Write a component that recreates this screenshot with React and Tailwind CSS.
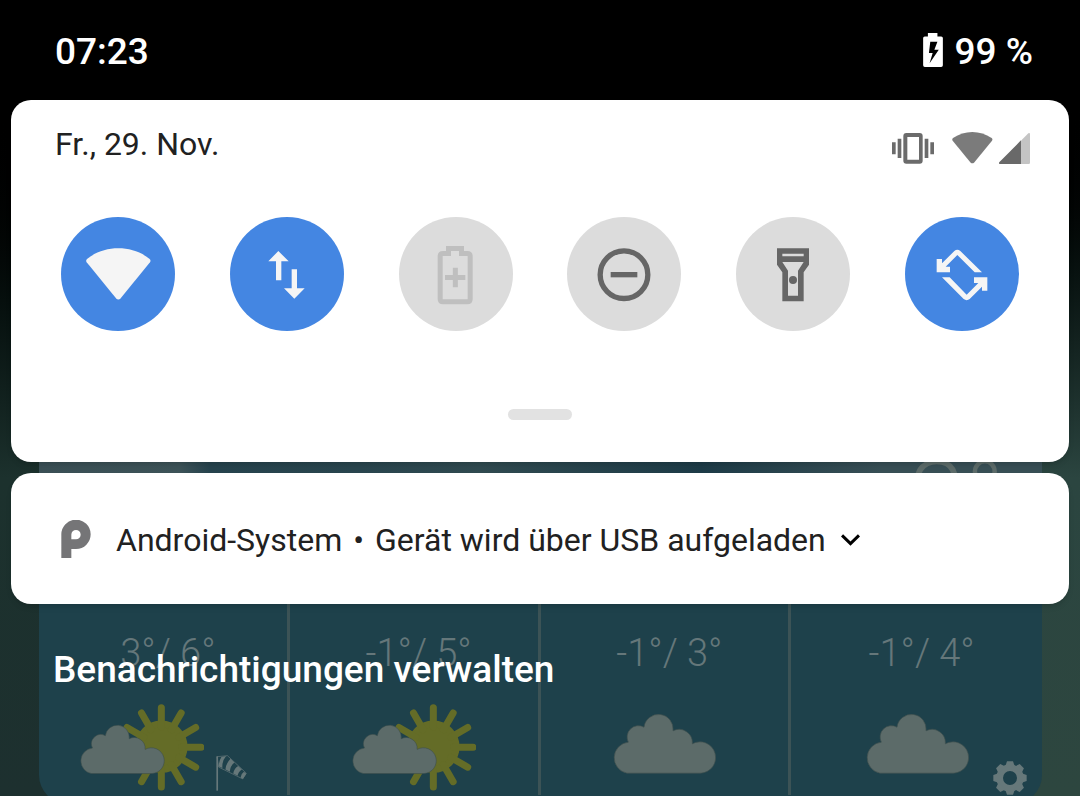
const CLOUD =
  "M145 519 A47 47 0 0 1 149 426 A34 34 0 0 1 196 381 A43 43 0 0 1 283 392 A40 40 0 0 1 341 431 A47 47 0 1 1 366 519 Z";

const TILES = [
  { label: "WLAN", state: "on", icon: WifiTile },
  { label: "Mobile Daten", state: "on", icon: DataTile },
  { label: "Energiesparmodus", state: "disabled", icon: BatteryTile },
  { label: "Bitte nicht stören", state: "off", icon: DndTile },
  { label: "Taschenlampe", state: "off", icon: TorchTile },
  { label: "Automatisch drehen", state: "on", icon: RotateTile },
];

const TILE_STYLES = {
  on: "bg-[#4486e2] text-[#f5f5f5]",
  off: "bg-[#dcdcdc] text-[#666666]",
  disabled: "bg-[#dcdcdc] text-[#bfbfbf]",
};

const FORECAST = [
  { id: 1, temp: "3°/ 6°", sky: "sun", windy: true },
  { id: 2, temp: "-1°/ 5°", sky: "sun" },
  { id: 3, temp: "-1°/ 3°", sky: "cloud" },
  { id: 4, temp: "-1°/ 4°", sky: "cloud" },
];

function WifiTile() {
  return (
    <svg viewBox="62 50 342 342" className="size-full" fill="currentColor" aria-hidden="true">
      <path d="M139 186 Q135 180 141 175 C168 154 200 144 234 144 C268 144 300 154 327 175 Q333 180 329 186 L241 294 Q234 301 227 294 Z" />
    </svg>
  );
}

function DataTile() {
  return (
    <svg viewBox="567 50 342 342" className="size-full" fill="currentColor" aria-hidden="true">
      <path d="M712 152 L743 183 H721 V240 H705 V183 H682 Z" />
      <path d="M752 207 H768 V264 H791 L760 295 L729 264 H752 Z" />
    </svg>
  );
}

function BatteryTile() {
  return (
    <svg viewBox="54 50 342 342" className="size-full" fill="none" stroke="currentColor" aria-hidden="true">
      <path
        strokeWidth="15"
        d="M202.500 144.500 H241.500 V159.500 H259 Q267.500 159.500 267.500 168 V296 Q267.500 304.500 259 304.500 H186 Q177.500 304.500 177.500 296 V168 Q177.500 159.500 186 159.500 H202.500 Z"
      />
      <path strokeWidth="15" d="M223 202 V261 M192 231.500 H253" />
    </svg>
  );
}

function DndTile() {
  return (
    <svg viewBox="561 50 342 342" className="size-full" fill="none" stroke="currentColor" aria-hidden="true">
      <circle cx="732" cy="223" r="71.500" strokeWidth="16" />
      <path strokeWidth="16" d="M692 223 H772" />
    </svg>
  );
}

function TorchTile() {
  return (
    <svg viewBox="48 50 342 342" className="size-full" fill="currentColor" aria-hidden="true">
      <path
        fillRule="evenodd"
        d="M171 144 H267 V193 L251 216 V303 H187 V216 L171 193 Z M187 160 V168 H251 V160 Z M187 185 L204 211 V286 H234 V211 L251 185 Z"
      />
      <circle cx="219" cy="239" r="12" />
    </svg>
  );
}

function RotateTile() {
  return (
    <svg viewBox="555 50 342 342" className="size-full" fill="currentColor" aria-hidden="true">
      <path d="M650 176 H666 V189 L703 152 Q712 144 721 152 L786 216 H764 L712 164 L677 199 H690 V216 H650 Z" />
      <path d="M802 271 H786 V259 L749 296 Q740 303 731 296 L666 231 H689 L740 283 L775 248 H762 V231 H802 Z" />
    </svg>
  );
}

function StatusBar() {
  return (
    <header className="flex h-[100px] items-center justify-between pt-1 pr-[47px] pl-[55px] text-[37px] leading-10 font-medium text-white">
      <time>07:23</time>
      <div className="flex items-center gap-3">
        <svg viewBox="129 41 58 100" className="mb-1 h-[34px] w-[20px]" fill="currentColor" aria-label="Akku wird geladen">
          <path
            fillRule="evenodd"
            d="M143 41 H171 V51 H182 Q187 51 187 56 V136 Q187 141 182 141 H134 Q129 141 129 136 V56 Q129 51 134 51 H143 Z M150 67 L146 100 H157 L148 130 L175 90 H162 L171 67 Z"
          />
        </svg>
        <span>99 %</span>
      </div>
    </header>
  );
}

function ConnectionIcons() {
  return (
    <div className="flex items-end" aria-hidden="true">
      <svg viewBox="36 338 126 93" className="mr-[18px] h-[31px] w-[42px]" fill="#6b6b6b">
        <path d="M36 366h11v36h-11z M53 355h11v58h-11z M134 355h11v58h-11z M151 366h11v36h-11z" />
        <path
          fillRule="evenodd"
          d="M79 338 H119 Q128 338 128 347 V421 Q128 430 119 430 H79 Q70 430 70 421 V347 Q70 338 79 338 Z M82 350 V418 H117 V350 Z"
        />
      </svg>
      <svg viewBox="217 334 123 96" className="mr-[6px] h-[32px] w-[41px]" fill="#7b7b7b">
        <path d="M219 360 Q216 356 220 352 C238 340 257 334 278 334 C299 334 318 340 336 352 Q340 356 337 360 L283 426 Q278 430 273 426 Z" />
      </svg>
      <svg viewBox="357 339 93 93" className="h-[31px] w-[31px]">
        <path fill="#c4c4c4" d="M360 432 H446 Q450 432 450 428 V343 Q450 337 445 340 L358 427 Q355 432 360 432 Z" />
        <path fill="#696969" d="M423 361 V432 H360 Q355 432 358 427 Z" />
      </svg>
    </div>
  );
}

function QuickSettings() {
  return (
    <section className="rounded-[20px] bg-white pt-[24px] pb-[42px] shadow-md">
      <div className="flex items-end justify-between pr-[39px] pl-[44px]">
        <p className="text-[32px] leading-10 text-[#212121]">Fr., 29. Nov.</p>
        <ConnectionIcons />
      </div>
      <div className="mt-[53px] flex justify-between px-[50px]">
        {TILES.map(({ label, state, icon: Icon }) => (
          <button
            key={label}
            type="button"
            aria-label={label}
            aria-pressed={state === "on"}
            disabled={state === "disabled"}
            className={`size-[114px] rounded-full ${TILE_STYLES[state]}`}
          >
            <Icon />
          </button>
        ))}
      </div>
      <div className="mx-auto mt-[78px] h-[11px] w-[64px] rounded-full bg-[#e2e2e2]" />
    </section>
  );
}

function Notification() {
  return (
    <section className="mt-[11px] flex min-h-[131px] items-center rounded-[20px] bg-white px-[50px] pt-0.5 text-[32px] leading-10 text-[#212121] shadow-md">
      <svg viewBox="184 240 90 114" className="mr-[25px] mb-0.5 h-[38px] w-[30px]" fill="#757577" aria-hidden="true">
        <path
          fillRule="evenodd"
          d="M185 354 V284 A44 44 0 1 1 229 327 H215 V354 Z M215 298 H229 A14 14 0 1 0 215 284 Z"
        />
      </svg>
      <span>Android-System</span>
      <span className="mx-[11px]">•</span>
      <span>Gerät wird über USB aufgeladen</span>
      <button type="button" aria-label="Maximieren" className="ml-[15px] text-black">
        <svg viewBox="361 283 56 35" className="h-[12px] w-[19px]" fill="none" stroke="currentColor" aria-hidden="true">
          <path strokeWidth="9" d="M364 287 L389 311 L414 287" />
        </svg>
      </button>
    </section>
  );
}

function Sun() {
  return (
    <svg viewBox="236 311 375 261" className="h-[87px] w-[125px]" aria-hidden="true">
      <g fill="#646c27" stroke="#646c27" strokeWidth="21" strokeLinecap="round">
        <circle cx="483" cy="439" r="68" />
        {[0, 30, 60, 90, 120, 150, 180, 210, 240, 270, 300, 330].map((angle) => (
          <path key={angle} d="M483 380 V322" transform={`rotate(${angle} 483 441)`} />
        ))}
      </g>
      <path d={CLOUD} transform="translate(154 93) scale(0.822)" fill="#5c6b69" stroke="#3a4d4c" strokeWidth="2" />
    </svg>
  );
}

function Cloud() {
  return (
    <svg viewBox="100 342 312 179" className="mb-[17px] h-[60px] w-[104px]" aria-hidden="true">
      <path d={CLOUD} fill="#5c6b69" stroke="#40504f" strokeWidth="2" />
    </svg>
  );
}

function Windsock() {
  return (
    <svg viewBox="648 464 92 107" className="ml-[12px] h-[36px] w-[31px]" fill="#66787a" aria-hidden="true">
      <path d="M649 468 h5 V570 h-5z" />
      <path fill="none" stroke="#66787a" strokeWidth="2" d="M651 469 L682 466 L738 518 L727 535 L656 500 Z" />
      <path d="M664 470 L678 467 Q665 482 667 503 L656 498 Q656 482 664 470 Z" />
      <path d="M691 475 L703 486 Q690 496 689 514 L676 507 Q678 488 691 475 Z" />
      <path d="M714 497 L725 507 Q714 514 712 526 L699 519 Q702 504 714 497 Z" />
      <path d="M731 514 L738 520 L728 535 L721 531 Q723 519 731 514 Z" />
    </svg>
  );
}

function Gear() {
  return (
    <svg viewBox="459 482 102 102" className="size-[34px]" aria-hidden="true">
      <circle cx="510" cy="533" r="31" fill="none" stroke="#66787a" strokeWidth="20" />
      {[0, 45, 90, 135, 180, 225, 270, 315].map((angle) => (
        <path key={angle} d="M495 500 L501 483 H519 L525 500 Z" fill="#66787a" transform={`rotate(${angle} 510 533)`} />
      ))}
    </svg>
  );
}

function WeatherWidget() {
  return (
    <div className="absolute top-[200px] right-[38px] -bottom-[8px] left-[39px] flex flex-col justify-end rounded-[29px] bg-[#1e414b]">
      <div className="flex grow items-end justify-end bg-[linear-gradient(to_right,#3a4f55_0%,#3d5358_14%,#26434d_17%,#29454e_32%,#304a50_44%,#1d3b47_66%,#384f55_84%,#384f55_100%)] pr-[38px] pb-[32px]">
        <span className="text-[102px] leading-[100px] font-light text-[#5c6b69]">3°</span>
      </div>
      <div className="mb-[9px] grid grid-cols-4">
        {FORECAST.map((day) => (
          <div
            key={day.id}
            className="flex h-[215px] flex-col items-center border-r-[3px] border-[#3c5356] pt-[49px] last:border-r-0"
          >
            <p className="pl-2.5 text-[38px] leading-12 font-light text-[#65777a]">{day.temp}</p>
            <div className="flex grow items-end pb-1">
              {day.sky === "sun" ? <Sun /> : <Cloud />}
              {day.windy && <Windsock />}
            </div>
          </div>
        ))}
      </div>
      <button type="button" aria-label="Wetter-Einstellungen" className="absolute right-[15px] bottom-[9px]">
        <Gear />
      </button>
    </div>
  );
}

export default function App() {
  return (
    <div className="relative min-h-screen overflow-hidden bg-linear-to-b from-black from-12% via-[#1c312d] via-60% to-[#1d302f] font-[Roboto,sans-serif]">
      <div className="absolute inset-y-0 right-0 w-[60px] bg-linear-to-b from-black from-12% via-[#2b4540] via-60% to-[#2d463f]" />
      <WeatherWidget />
      <div className="relative">
        <StatusBar />
        <main className="px-[11px]">
          <QuickSettings />
          <Notification />
          <button type="button" className="mt-[42px] ml-[42px] text-[37px] leading-12 font-medium text-white">
            Benachrichtigungen verwalten
          </button>
        </main>
      </div>
    </div>
  );
}
